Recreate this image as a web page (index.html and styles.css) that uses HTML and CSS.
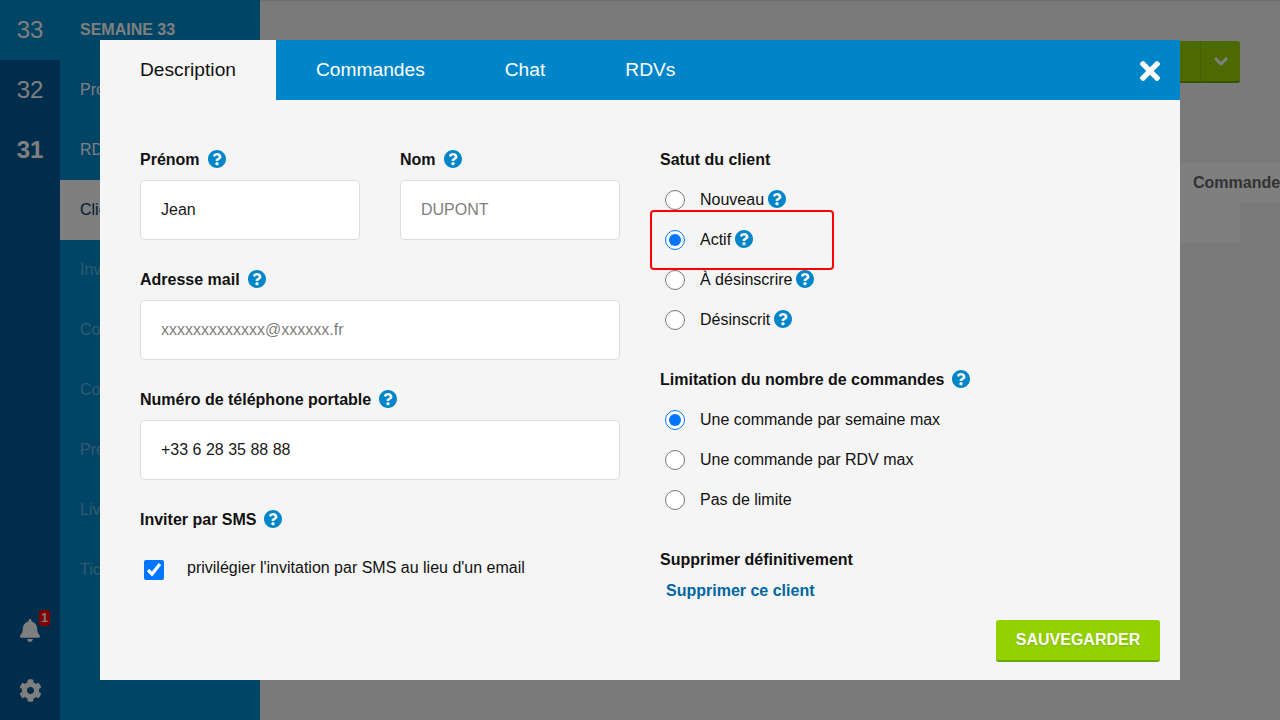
FILE: index.html
```html
<!DOCTYPE html>
<html lang="fr">

<head>
    <meta charset="UTF-8">
    <meta name="viewport" content="width=device-width, initial-scale=1.0">
    <title>Client</title>
    <link rel="stylesheet" href="styles.css">
</head>

<body>
    <svg class="icon-defs" aria-hidden="true">
        <symbol id="icon-help" viewBox="8 8 496 496">
            <path d="M504 256c0 136.997-111.043 248-248 248S8 392.997 8 256C8 119.083 119.043 8 256 8s248 111.083 248 248zM262.655 90c-54.497 0-89.255 22.957-116.549 63.758-3.536 5.286-2.353 12.415 2.715 16.258l34.699 26.31c5.205 3.947 12.621 3.008 16.665-2.122 17.864-22.658 30.113-35.797 57.303-35.797 20.429 0 45.698 13.148 45.698 32.958 0 14.976-12.363 22.667-32.534 33.976C247.128 238.528 216 254.941 216 296v4c0 6.627 5.373 12 12 12h56c6.627 0 12-5.373 12-12v-1.333c0-28.462 83.186-29.647 83.186-106.667 0-58.002-60.165-102-116.531-102zM256 338c-25.365 0-46 20.635-46 46 0 25.364 20.635 46 46 46s46-20.636 46-46c0-25.365-20.635-46-46-46z"/>
        </symbol>
    </svg>

    <div class="app">
        <!-- semaines -->
        <div class="rail">
            <div class="week current">33</div>
            <div class="week">32</div>
            <div class="week bold">31</div>
            <div class="rail-bottom">
                <div class="rail-icon">
                    <svg class="bell" viewBox="0 0 448 512"><path d="M224 512c35.32 0 63.97-28.65 63.97-64H160.03c0 35.35 28.65 64 63.97 64zm215.39-149.71c-19.32-20.76-55.47-51.99-55.47-154.29 0-77.7-54.48-139.9-127.94-155.16V32c0-17.67-14.32-32-31.98-32s-31.98 14.33-31.98 32v20.84C118.56 68.1 64.08 130.3 64.08 208c0 102.3-36.15 133.53-55.47 154.29-6 6.45-8.66 14.16-8.61 21.71.11 16.4 12.98 32 32.1 32h383.8c19.12 0 32-15.6 32.1-32 .05-7.55-2.61-15.27-8.61-21.71z"/></svg>
                    <span class="badge">1</span>
                </div>
                <div class="rail-icon">
                    <svg class="cog" viewBox="0 0 512 512"><path d="M487.4 315.7l-42.6-24.6c4.3-23.2 4.3-47 0-70.2l42.6-24.6c4.9-2.8 7.1-8.6 5.5-14-11.1-35.6-30-67.8-54.7-94.6-3.8-4.1-10-5.1-14.8-2.3L380.8 110c-17.9-15.4-38.5-27.3-60.8-35.1V25.8c0-5.6-3.9-10.5-9.4-11.7-36.7-8.2-74.3-7.8-109.2 0-5.5 1.2-9.4 6.1-9.4 11.7V75c-22.2 7.9-42.8 19.8-60.8 35.1L88.7 85.5c-4.9-2.8-11-1.9-14.8 2.3-24.7 26.7-43.6 58.9-54.7 94.6-1.7 5.4.6 11.2 5.5 14L67.3 221c-4.3 23.2-4.3 47 0 70.2l-42.6 24.6c-4.9 2.8-7.1 8.6-5.5 14 11.1 35.6 30 67.8 54.7 94.6 3.8 4.1 10 5.1 14.8 2.3l42.6-24.6c17.9 15.4 38.5 27.3 60.8 35.1v49.2c0 5.6 3.9 10.5 9.4 11.7 36.7 8.2 74.3 7.8 109.2 0 5.5-1.2 9.4-6.1 9.4-11.7v-49.2c22.2-7.9 42.8-19.8 60.8-35.1l42.6 24.6c4.9 2.8 11 1.9 14.8-2.3 24.7-26.7 43.6-58.9 54.7-94.6 1.5-5.5-.7-11.3-5.6-14.1zM256 336c-44.1 0-80-35.9-80-80s35.9-80 80-80 80 35.9 80 80-35.9 80-80 80z"/></svg>
                </div>
            </div>
        </div>

        <!-- menu de la semaine -->
        <div class="menu">
            <div class="menu-title">SEMAINE 33</div>
            <div class="menu-item">Produits</div>
            <div class="menu-item">RDV</div>
            <div class="menu-item active">Clients</div>
            <div class="menu-item dim">Invitations</div>
            <div class="menu-item dim">Commandes</div>
            <div class="menu-item dim">Coupons</div>
            <div class="menu-item dim">Présentation</div>
            <div class="menu-item dim">Livraison</div>
            <div class="menu-item dim">Tickets</div>
        </div>

        <!-- contenu derriere la fenetre -->
        <div class="main">
            <div class="main-actions">
                <div class="split-btn">
                    <span class="split-label"></span>
                    <span class="split-arrow">
                        <svg viewBox="0 0 16 10"><path d="M2 2l6 6 6-6" /></svg>
                    </span>
                </div>
            </div>
            <div class="table-head">Commandes</div>
            <div class="table-row"></div>
        </div>
    </div>

    <div class="overlay"></div>

    <div class="modal">
        <div class="tabs">
            <div class="tab selected">Description</div>
            <div class="tab">Commandes</div>
            <div class="tab">Chat</div>
            <div class="tab">RDVs</div>
            <svg class="close" viewBox="9 80 334 352"><path d="M242.72 256l100.07-100.07c12.28-12.28 12.28-32.19 0-44.48l-22.24-22.24c-12.28-12.28-32.19-12.28-44.48 0L176 189.28 75.93 89.21c-12.28-12.28-32.19-12.28-44.48 0L9.21 111.45c-12.28 12.28-12.28 32.19 0 44.48L109.28 256 9.21 356.07c-12.28 12.28-12.28 32.19 0 44.48l22.24 22.24c12.28 12.28 32.2 12.28 44.48 0L176 322.72l100.07 100.07c12.28 12.28 32.2 12.28 44.48 0l22.24-22.24c12.28-12.28 12.28-32.19 0-44.48L242.72 256z"/></svg>
        </div>

        <div class="modal-body">
            <div class="col-left">
                <div class="field-row">
                    <div class="field">
                        <div class="field-label">Prénom <svg class="help"><use href="#icon-help"/></svg></div>
                        <input class="text-input" type="text" value="Jean">
                    </div>
                    <div class="field">
                        <div class="field-label">Nom <svg class="help"><use href="#icon-help"/></svg></div>
                        <input class="text-input" type="text" placeholder="DUPONT">
                    </div>
                </div>
                <div class="field">
                    <div class="field-label">Adresse mail <svg class="help"><use href="#icon-help"/></svg></div>
                    <input class="text-input" type="text" placeholder="xxxxxxxxxxxxx@xxxxxx.fr">
                </div>
                <div class="field">
                    <div class="field-label">Numéro de téléphone portable <svg class="help"><use href="#icon-help"/></svg></div>
                    <input class="text-input" type="text" value="+33 6 28 35 88 88">
                </div>
                <div class="field">
                    <div class="field-label">Inviter par SMS <svg class="help"><use href="#icon-help"/></svg></div>
                    <label class="check-row">
                        <input type="checkbox" checked>
                        <span>privilégier l'invitation par SMS au lieu d'un email</span>
                    </label>
                </div>
            </div>

            <div class="col-right">
                <div class="radio-group">
                    <div class="field-label">Satut du client</div>
                    <label class="radio-row"><input type="radio" name="statut"><span>Nouveau</span><svg class="help tight"><use href="#icon-help"/></svg></label>
                    <label class="radio-row highlighted"><input type="radio" name="statut" checked><span>Actif</span><svg class="help tight"><use href="#icon-help"/></svg></label>
                    <label class="radio-row"><input type="radio" name="statut"><span>À désinscrire</span><svg class="help tight"><use href="#icon-help"/></svg></label>
                    <label class="radio-row"><input type="radio" name="statut"><span>Désinscrit</span><svg class="help tight"><use href="#icon-help"/></svg></label>
                </div>
                <div class="radio-group">
                    <div class="field-label">Limitation du nombre de commandes <svg class="help"><use href="#icon-help"/></svg></div>
                    <label class="radio-row"><input type="radio" name="limite" checked><span>Une commande par semaine max</span></label>
                    <label class="radio-row"><input type="radio" name="limite"><span>Une commande par RDV max</span></label>
                    <label class="radio-row"><input type="radio" name="limite"><span>Pas de limite</span></label>
                </div>
                <div class="field-label">Supprimer définitivement</div>
                <a class="delete-link" href="#">Supprimer ce client</a>
            </div>
        </div>

        <div class="modal-footer">
            <button class="save-btn">SAUVEGARDER</button>
        </div>
    </div>
</body>

</html>
```

FILE: styles.css
```css
/* Base */
html,
body {
    height: 100%;
}

body {
    margin: 0;
    overflow: hidden;
    font-family: "Liberation Sans", Arial, sans-serif;
    font-size: 16px;
    color: #111;
}

.icon-defs {
    display: none;
}

.app {
    display: flex;
    height: 720px;
    background-color: #f4f4f4;
    border-top: 1px solid #ddd;
    box-sizing: border-box;
}

/* Colonne des semaines */
.rail {
    display: flex;
    flex-direction: column;
    width: 60px;
    margin-top: -1px;
    background-color: #005a96;
    color: #fff;
}

.week {
    display: flex;
    align-items: center;
    justify-content: center;
    height: 60px;
    font-size: 24px;
}

.week.current {
    background-color: #0088cc;
}

.week.bold {
    font-weight: bold;
}

.rail-bottom {
    margin-top: auto;
}

.rail-icon {
    position: relative;
    display: flex;
    align-items: center;
    justify-content: center;
    height: 60px;
}

.bell {
    width: 20px;
    height: 23px;
    fill: #fff;
}

.cog {
    width: 23px;
    height: 23px;
    fill: #fff;
}

.badge {
    position: absolute;
    top: 10px;
    right: 10px;
    width: 11px;
    height: 16px;
    border-radius: 3px;
    background-color: #f00;
    color: #fff;
    font-size: 12px;
    font-weight: bold;
    line-height: 16px;
    text-align: center;
}

/* Menu */
.menu {
    width: 200px;
    margin-top: -1px;
    background-color: #0088cc;
    color: #fff;
}

.menu-title,
.menu-item {
    height: 60px;
    padding-left: 20px;
    line-height: 60px;
}

.menu-title {
    font-weight: bold;
}

.menu-item.active {
    background-color: #fff;
    color: #036;
}

.menu-item.dim {
    color: rgba(255, 255, 255, 0.4);
}

/* Contenu */
.main {
    flex: 1;
    min-width: 0;
    overflow: hidden;
}

.main-actions {
    display: flex;
    justify-content: flex-end;
    padding: 40px 40px 0 0;
}

.split-btn {
    display: flex;
    width: 160px;
    height: 42px;
    border-bottom: 2px solid #6aa800;
    border-radius: 3px;
    background-color: #99d400;
    box-sizing: border-box;
}

.split-label {
    flex: 1;
}

.split-arrow {
    display: flex;
    align-items: center;
    justify-content: center;
    width: 39px;
    border-left: 1px solid #88bd00;
}

.split-arrow svg {
    width: 16px;
    height: 10px;
    fill: none;
    stroke: #fff;
    stroke-width: 3;
}

.table-head {
    height: 40px;
    margin-top: 80px;
    padding-left: 933px;
    background-color: #fff;
    color: #666;
    font-weight: bold;
    line-height: 40px;
    white-space: nowrap;
}

.table-row {
    height: 40px;
    margin-right: 40px;
    background-color: #fff;
}

/* Fenetre modale */
.overlay {
    position: fixed;
    inset: 0;
    background-color: rgba(0, 0, 0, 0.5);
}

.modal {
    position: fixed;
    top: 40px;
    left: 100px;
    width: 1080px;
    height: 640px;
    background-color: #f5f5f5;
}

.tabs {
    position: relative;
    display: flex;
    height: 60px;
    background-color: #0085c8;
}

.tab {
    padding: 0 40px;
    color: #fff;
    font-size: 19.2px;
    line-height: 60px;
}

.tab.selected {
    background-color: #f5f5f5;
    color: #111;
}

.close {
    position: absolute;
    top: 21px;
    right: 20px;
    width: 20px;
    height: 20px;
    fill: #fff;
}

.modal-body {
    display: flex;
    gap: 40px;
    height: 480px;
    padding: 40px 40px 0;
}

.col-left {
    width: 480px;
}

.col-right {
    flex: 1;
}

.field-row {
    display: flex;
    gap: 40px;
}

.field-row .field {
    width: 220px;
}

.field {
    margin-bottom: 20px;
}

.field-label {
    display: flex;
    align-items: center;
    gap: 8px;
    height: 40px;
    font-weight: bold;
}

.help {
    width: 18px;
    height: 18px;
    margin-top: -2px;
    fill: #0085c8;
}

.help.tight {
    margin-left: 4px;
}

.text-input {
    display: block;
    width: 100%;
    height: 60px;
    padding: 0 20px;
    border: 1px solid #ddd;
    border-radius: 4px;
    background-color: #fff;
    color: #1a1a1a;
    font-family: inherit;
    font-size: 16px;
    box-sizing: border-box;
}

.text-input::placeholder {
    color: #808080;
}

.check-row {
    display: flex;
    align-items: center;
    height: 60px;
}

.check-row input {
    width: 20px;
    height: 20px;
    margin: 0 23px 0 4px;
}

.check-row span {
    padding-bottom: 4px;
}

/* Boutons radio */
.radio-group {
    margin-bottom: 20px;
}

.radio-row {
    display: flex;
    align-items: center;
    height: 40px;
}

.radio-row input {
    width: 20px;
    height: 20px;
    margin: 0 15px 0 5px;
}

/* encadre rouge par dessus la ligne */
.radio-row.highlighted {
    position: relative;
}

.radio-row.highlighted::after {
    content: "";
    position: absolute;
    top: -10px;
    left: -10px;
    width: 180px;
    height: 56px;
    border: 2px solid #f00;
    border-radius: 4px;
}

.delete-link {
    display: block;
    margin: 1px 0 0 6px;
    color: #0066a4;
    font-weight: bold;
    text-decoration: none;
    line-height: 20px;
}

.modal-footer {
    display: flex;
    justify-content: flex-end;
    padding: 0 20px;
}

.save-btn {
    width: 164px;
    height: 42px;
    padding: 0;
    border: 0;
    border-bottom: 2px solid #64a800;
    border-radius: 3px;
    background-color: #93d100;
    color: #fff;
    font-family: inherit;
    font-size: 16px;
    font-weight: bold;
    text-shadow: 0 1px 2px rgba(0, 0, 0, 0.15);
}
```
